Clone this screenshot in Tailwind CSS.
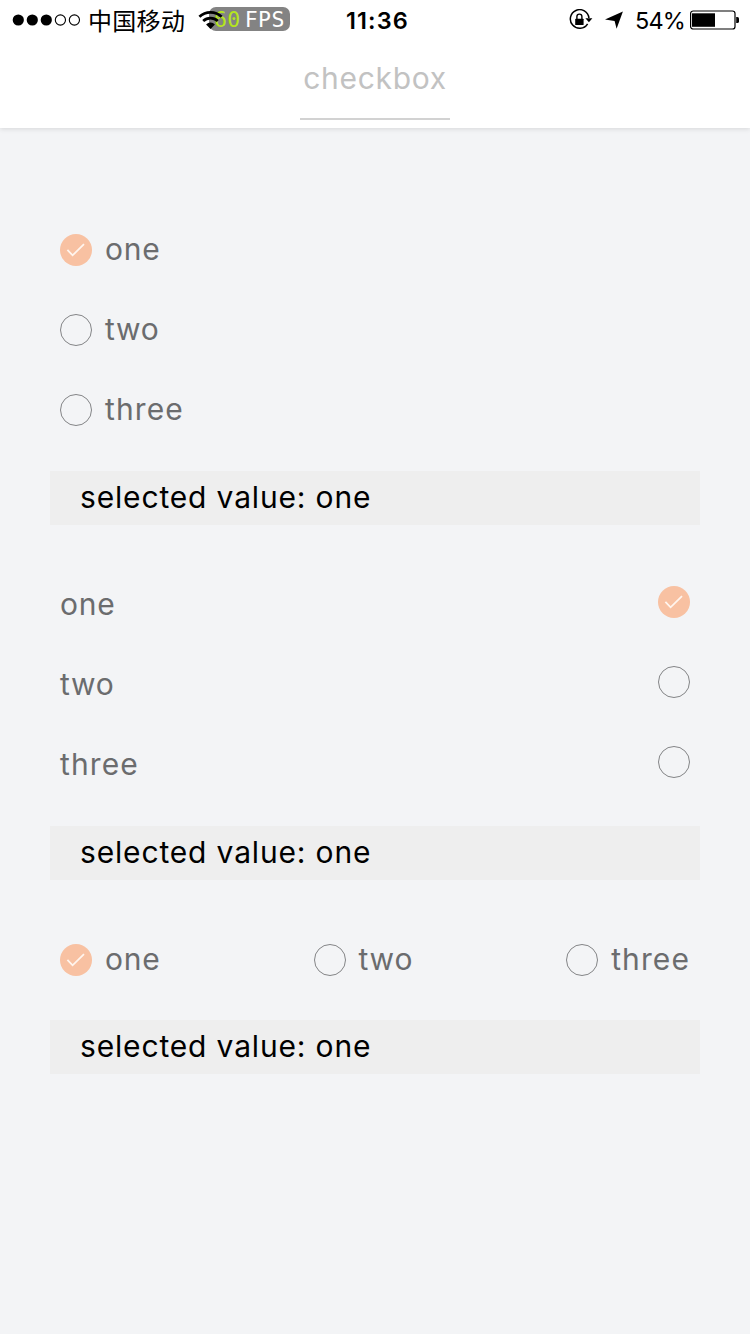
<!DOCTYPE html>
<html lang="en">
<head>
<meta charset="utf-8">
<title>checkbox</title>
<script src="https://cdn.jsdelivr.net/npm/@tailwindcss/browser@4"></script>
</head>
<body class="w-[750px] h-[1334px] overflow-hidden bg-[#f3f4f6] font-['Inter','Noto_Sans_CJK_SC',sans-serif] text-[30px] leading-[40px] text-[#6b6c6e]">
<svg class="hidden">
  <symbol id="on" viewBox="0 0 32 32"><circle cx="16" cy="16" r="16" fill="#f8c1a2"/><path d="M7.4 15.8l5.2 5.5L24 10.2" fill="none" stroke="#fff5ee" stroke-width="1.8"/></symbol>
  <symbol id="off" viewBox="0 0 32 32"><circle cx="16" cy="16" r="15.5" fill="none" stroke="#838486" stroke-width="1"/></symbol>
</svg>
<header class="h-[128px] bg-white shadow-[0_1px_5px_rgba(0,0,0,0.12)] flex flex-col">
  <div class="relative h-[40px] flex items-center text-black">
    <svg class="ml-[12px] w-[70px] h-[12px]" viewBox="0 0 70 12"><circle cx="6.3" cy="6" r="5.6"/><circle cx="20.3" cy="6" r="5.6"/><circle cx="34.3" cy="6" r="5.6"/><g fill="none" stroke="#000" stroke-width="1.1"><circle cx="48.4" cy="6" r="5.1"/><circle cx="62.4" cy="6" r="5.1"/></g></svg>
    <span class="ml-[6px] w-[99px] text-[24px] tracking-[0.3px] whitespace-nowrap font-['Noto_Sans_CJK_SC',sans-serif]">中国移动</span>
    <div class="absolute left-[209px] top-[7px] w-[81px] h-[24px] rounded-[7px] bg-[#838383] text-[21.5px] leading-[25px] text-white whitespace-pre pl-[5px] font-['DejaVu_Sans_Mono',monospace] tracking-[0.4px]"><span class="text-[#b5e61d]">60</span><span class="ml-[4px]">FPS</span></div>
    <svg class="relative ml-[11px] w-[27px] h-[20px]" viewBox="0 0 27 20"><g fill="none" stroke="#000" stroke-width="2.7"><path d="M1.4 6.8a16 16 0 0 1 22.2 0"/><path d="M5.2 11a10.5 10.5 0 0 1 14.6 0"/></g><path d="M12.5 18.9l-4.4-4.5a6.3 6.3 0 0 1 8.8 0z"/></svg>
    <span class="relative top-px ml-[121px] w-[66px] text-[23.5px] font-semibold tracking-[1.1px] whitespace-nowrap">11:36</span>
    <svg class="ml-[157px] w-[24px] h-[22px]" viewBox="0 0 24 22"><path d="M18.6 14.8A9.3 9.3 0 1 1 19.9 9" fill="none" stroke="#000" stroke-width="1.5"/><path d="M16.4 9.2h7l-3.5 4z"/><rect x="6.2" y="9.7" width="8.4" height="6.4" rx=".6"/><path d="M7.9 10V7.6a2.5 2.5 0 0 1 5 0V10" fill="none" stroke="#000" stroke-width="1.4"/></svg>
    <svg class="ml-[12px] w-[18px] h-[18px]" viewBox="0 0 18 18"><path d="M17.9.4L11.6 17.8 9.6 10 0 8.6z"/></svg>
    <span class="relative top-px ml-[12px] w-[55px] text-[23.5px] tracking-[-0.9px] whitespace-nowrap">54%</span>
    <svg class="w-[50px] h-[20px]" viewBox="0 0 50 20"><rect x=".6" y="1" width="44.4" height="18" rx="2.6" fill="none" stroke="#000" stroke-width="1.2"/><path d="M2 3.3h23v13.5H2z"/><path d="M46.2 7h1.2q1.6 0 1.6 1.6v2.8q0 1.6-1.6 1.6h-1.2z"/></svg>
  </div>
  <div class="mx-auto w-[150px] h-[80px] border-b-2 border-[#d2d2d2] pt-[18px] text-center text-[#c2c2c2] tracking-[0.7px]">checkbox</div>
</header>
<main class="px-[50px] pt-[82px] tracking-[0.8px]">
  <section>
    <div class="h-[80px] px-[10px] flex items-center gap-[13px]"><svg class="size-8"><use href="#on"/></svg><span class="pb-[2px]">one</span></div>
    <div class="h-[80px] px-[10px] flex items-center gap-[13px]"><svg class="size-8"><use href="#off"/></svg><span class="pb-[2px]">two</span></div>
    <div class="h-[80px] px-[10px] flex items-center gap-[13px]"><svg class="size-8"><use href="#off"/></svg><span class="pb-[2px] tracking-[1.1px]">three</span></div>
    <div class="mt-[21px] h-[54px] bg-[#eeeeee] pl-[30px] pt-[6px] text-black tracking-[0.84px]">selected value: one</div>
  </section>
  <section class="mt-[40px]">
    <div class="h-[80px] px-[10px] flex items-center justify-between"><span class="pb-[2px]">one</span><svg class="size-8 mb-[6px]"><use href="#on"/></svg></div>
    <div class="h-[80px] px-[10px] flex items-center justify-between"><span class="pb-[2px]">two</span><svg class="size-8 mb-[6px]"><use href="#off"/></svg></div>
    <div class="h-[80px] px-[10px] flex items-center justify-between"><span class="pb-[2px] tracking-[1.1px]">three</span><svg class="size-8 mb-[6px]"><use href="#off"/></svg></div>
    <div class="mt-[21px] h-[54px] bg-[#eeeeee] pl-[30px] pt-[6px] text-black tracking-[0.84px]">selected value: one</div>
  </section>
  <section class="mt-[40px]">
    <div class="h-[80px] px-[10px] flex items-center justify-between">
      <div class="flex items-center gap-[13px]"><svg class="size-8"><use href="#on"/></svg><span class="pb-[2px]">one</span></div>
      <div class="flex items-center gap-[13px]"><svg class="size-8"><use href="#off"/></svg><span class="pb-[2px]">two</span></div>
      <div class="flex items-center gap-[13px]"><svg class="size-8"><use href="#off"/></svg><span class="pb-[2px] tracking-[1.1px]">three</span></div>
    </div>
    <div class="mt-[20px] h-[54px] bg-[#eeeeee] pl-[30px] pt-[6px] text-black tracking-[0.84px]">selected value: one</div>
  </section>
</main>
</body>
</html>
